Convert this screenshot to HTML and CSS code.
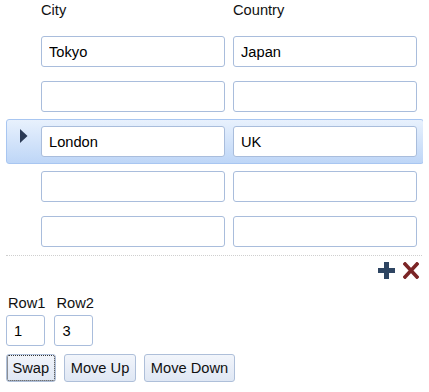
FILE: index.html
```html
<!DOCTYPE html>
<html lang="en">
<head>
  <meta charset="UTF-8" />
  <title>Grid rows</title>
  <link rel="stylesheet" href="styles.css">
</head>
<body>

  <div class="grid">
    <div class="grid-head">
      <span></span>
      <span>City</span>
      <span>Country</span>
    </div>

    <div class="grid-row">
      <span class="marker"></span>
      <input type="text" value="Tokyo" />
      <input type="text" value="Japan" />
    </div>
    <div class="grid-row">
      <span class="marker"></span>
      <input type="text" value="" />
      <input type="text" value="" />
    </div>
    <div class="grid-row selected">
      <span class="marker">
        <svg width="8" height="14" viewBox="0 0 8 14"><path d="M0 0 L7.5 7 L0 14 Z" fill="#2b3a55"/></svg>
      </span>
      <input type="text" value="London" />
      <input type="text" value="UK" />
    </div>
    <div class="grid-row">
      <span class="marker"></span>
      <input type="text" value="" />
      <input type="text" value="" />
    </div>
    <div class="grid-row">
      <span class="marker"></span>
      <input type="text" value="" />
      <input type="text" value="" />
    </div>

    <div class="grid-tools">
      <a href="#" class="tool" aria-label="Add row">
        <svg width="17" height="17" viewBox="0 0 17 17"><path d="M6 0 H11 V6 H17 V11 H11 V17 H6 V11 H0 V6 H6 Z" fill="#2e4562"/></svg>
      </a>
      <a href="#" class="tool" aria-label="Delete row">
        <svg width="16" height="17" viewBox="0 0 16 17"><path d="M2 2 L14 15 M14 2 L2 15" stroke="#7b2526" stroke-width="3.6" stroke-linecap="square"/></svg>
      </a>
    </div>
  </div>

  <div class="swap">
    <label class="field">
      <span>Row1</span>
      <input type="text" value="1" />
    </label>
    <label class="field">
      <span>Row2</span>
      <input type="text" value="3" />
    </label>
  </div>

  <div class="actions">
    <button type="button" class="focused">Swap</button>
    <button type="button">Move Up</button>
    <button type="button">Move Down</button>
  </div>

</body>
</html>
```

FILE: styles.css
```css
/* Base */
* { box-sizing: border-box; }
body {
  margin: 0 6px;
  font-family: 'Liberation Sans', Arial, sans-serif;
  font-size: 11pt;
  color: #111;
  background: #fff;
}

input {
  font-family: inherit;
  font-size: 11pt;
  color: #000;
  height: 31px;
  padding: 0 7px;
  border: 1px solid #a9bddc;
  border-radius: 3px;
  background: #fff;
  outline: none;
}

/* Grid */
.grid { width: 418px; }
.grid-head,
.grid-row {
  display: grid;
  grid-template-columns: 26px 184px 184px;
  column-gap: 8px;
}
.grid-head {
  height: 29px;
  padding: 2px 0 0 1px;
  line-height: 16px;
}
.grid-row {
  height: 45px;
  padding: 6px 6px 6px 0;
  border: 1px solid transparent;
  border-radius: 3px;
}
.grid-row input { width: 184px; }
.grid-row.selected {
  background: linear-gradient(#e8f1fd, #bed6f7);
  border-color: #a8c6f1;
}
.marker {
  padding: 3px 0 0 13px;
}
.marker svg { display: block; }

.grid-tools {
  display: flex;
  justify-content: flex-end;
  gap: 8px;
  margin-top: 1px;
  padding: 6px 5px 0 0;
  border-top: 1px dotted #cfcfcf;
}
.tool svg { display: block; }

/* Swap fields */
.swap {
  display: flex;
  gap: 9px;
  margin-top: 16px;
}
.field span {
  display: block;
  line-height: 16px;
  padding-left: 2px;
  margin-bottom: 4px;
}
.field input {
  width: 39px;
  display: block;
}

/* Buttons */
.actions {
  display: flex;
  gap: 8.5px;
  margin-top: 8px;
}
.actions button {
  font-family: inherit;
  font-size: 11pt;
  color: #111;
  height: 28px;
  padding: 0 5.5px;
  border: 1px solid #aebfd9;
  border-radius: 3px;
  background: linear-gradient(#f2f5fb, #dfe7f4);
  cursor: pointer;
}
.actions button.focused {
  outline: 1px dotted #333;
  outline-offset: -2px;
}
```
